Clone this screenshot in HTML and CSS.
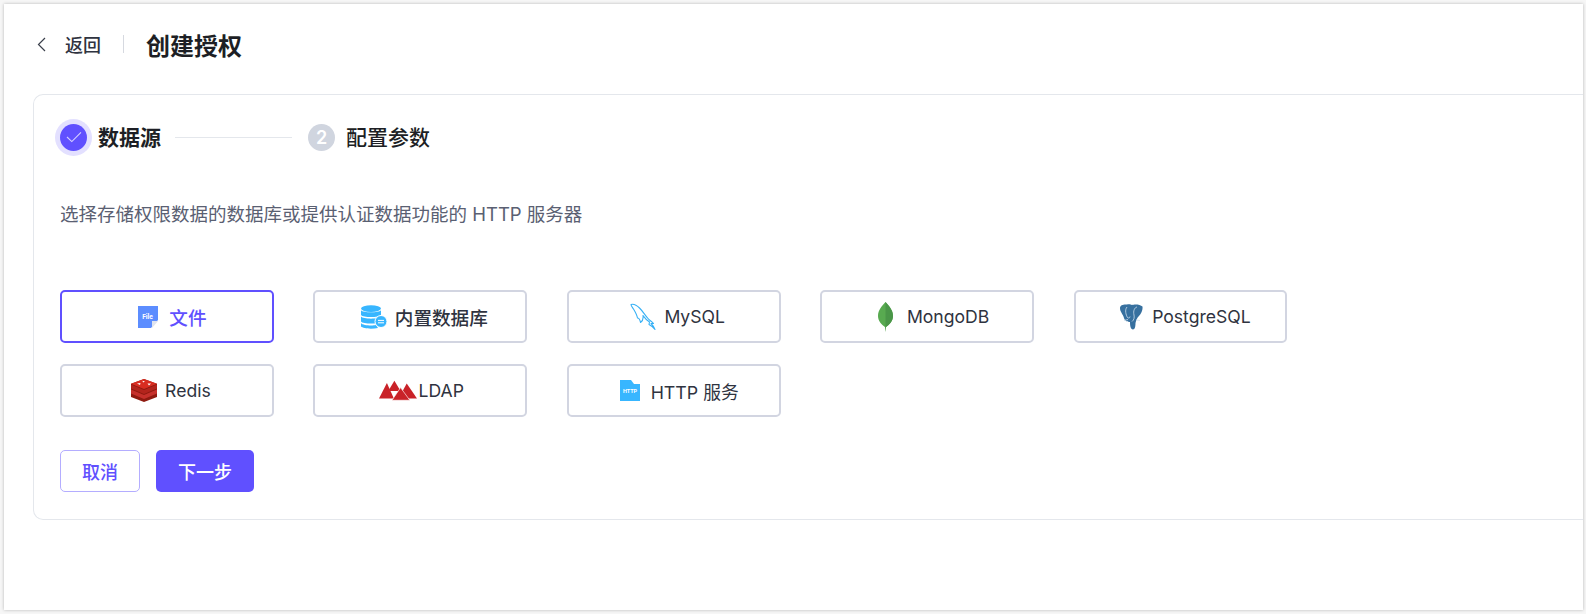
FILE: index.html
```html
<!doctype html>
<html>
	<head>
		<title>创建授权</title>
		<link rel="stylesheet" href="styles.css">
	</head>

	<body>
		<div class="page">
			<div class="page-header">
				<a class="back">
					<svg class="back-icon" width="9" height="15" viewBox="0 0 9 15"><path d="M8 1 1.5 7.5 8 14" fill="none" stroke="#3a3f4b" stroke-width="1.2"/></svg>
					<span>返回</span>
				</a>
				<span class="header-divider"></span>
				<h1>创建授权</h1>
			</div>

			<div class="card">
				<div class="steps">
					<div class="step step-done">
						<span class="step-dot">
							<svg width="16" height="12" viewBox="0 0 16 12"><path d="M1 6 5.8 10.6 15 1.4" fill="none" stroke="#d6d1ff" stroke-width="1.1"/></svg>
						</span>
						<span class="step-title">数据源</span>
					</div>
					<span class="step-line"></span>
					<div class="step">
						<span class="step-dot step-dot-wait">2</span>
						<span class="step-title step-title-wait">配置参数</span>
					</div>
				</div>

				<p class="desc">选择存储权限数据的数据库或提供认证数据功能的 HTTP 服务器</p>

				<div class="sources">
					<div class="source source-active">
						<span class="source-logo">
							<svg width="20" height="22" viewBox="0 0 20 22">
								<path d="M0 0H20V14L13 22H0Z" fill="#5c8dff"/>
								<path d="M20 15 14 22V15Z" fill="#dfe3ee"/>
								<text x="9.5" y="13" font-size="6.6" font-weight="700" fill="#fff" text-anchor="middle" font-family="Roboto, sans-serif">File</text>
							</svg>
						</span>
						<span class="label-cjk">文件</span>
					</div>
					<div class="source">
						<span class="source-logo">
							<svg width="26" height="24" viewBox="0 0 26 24">
								<ellipse cx="10" cy="3.6" rx="10" ry="3.4" fill="#38b6ff"/>
								<path d="M0 5.2C2 8 18 8 20 5.2V10C18 12.8 2 12.8 0 10Z" fill="#38b6ff"/>
								<path d="M0 11.6C2 14.4 18 14.4 20 11.6V16.4C18 19.2 2 19.2 0 16.4Z" fill="#38b6ff"/>
								<path d="M0 18C2 20.8 12 20.8 15 20L17 23C10 24.5 2 23.5 0 21.6Z" fill="#38b6ff"/>
								<circle cx="20" cy="16.5" r="6" fill="#38b6ff" stroke="#fff" stroke-width="1"/>
								<path d="M17 15.4H23M17 17.8H23" stroke="#fff" stroke-width="1"/>
							</svg>
						</span>
						<span class="label-cjk">内置数据库</span>
					</div>
					<div class="source">
						<span class="source-logo">
							<svg width="26" height="27" viewBox="0 0 26 27">
								<path d="M1 1.500C4 0.500 7 2.500 9.500 5 13 8.500 15 12 18 15.500 19.500 17.500 22 18.500 23.500 20.500L21 20.500C22.500 22 24 24 25 26.500 23 24 21 22.500 19 21.500L19.500 19C16 17 14.500 14.500 13 12.500 13.500 15.500 12.500 18 10.500 19.500 10 17 9 15 7.500 15 7 12 5 8.500 3.500 6 2.500 4.500 1 3 1 1.500Z" fill="none" stroke="#36b0f5" stroke-width="1.1" stroke-linejoin="round"/>
							</svg>
						</span>
						<span class="label-latin">MySQL</span>
					</div>
					<div class="source">
						<span class="source-logo">
							<svg width="15" height="30" viewBox="0 0 15 30">
								<path d="M7.5 0C11 4 15 8 15 14 15 19 11.500 22.500 8 25L7.500 30 7 25C3.500 22.500 0 19 0 14 0 8 4 4 7.500 0Z" fill="#58aa50"/>
								<path d="M7.500 0C11 4 15 8 15 14 15 19 11.500 22.500 8 25L7.500 30Z" fill="#4a9648"/>
							</svg>
						</span>
						<span class="label-latin">MongoDB</span>
					</div>
					<div class="source">
						<span class="source-logo">
							<svg width="23" height="26" viewBox="0 0 23 26">
								<path d="M0 4C0 1 4 0 7 0.500 9 0 11 0.500 12 1 14 0 20 0 22.500 2.500 23 6 21 10 18.500 12.500 17 14 16 17 15.500 19 15.500 22 15 25.500 13 25.500 10.500 25.500 10 21.500 10 18 8 18 5 17.500 4 14 3 10 0 8 0 4Z" fill="#37709f"/>
								<path d="M7 3C4.500 6 6 11 7.500 13.500 8.500 14.500 10 14 10 12.500M17 3C14.500 3.500 13 7 14 11 14.500 13.500 14 16 12 17.500M4 16.500 8 15.500M16 16 20 16.500" fill="none" stroke="#cfe0ee" stroke-width=".8"/>
							</svg>
						</span>
						<span class="label-latin">PostgreSQL</span>
					</div>
					<div class="source">
						<span class="source-logo">
							<svg width="26" height="23" viewBox="0 0 26 23">
								<path d="M0 4.800 13 0 26 4.800V18L13 23 0 18Z" fill="#8f1a10"/>
								<path d="M0 10.500 13 16 26 10.500 26 14.500 13 20 0 14.500Z" fill="#c6302b"/>
								<path d="M0 5.500 13 11 26 5.500 26 9.500 13 15 0 9.500Z" fill="#b3241c"/>
								<path d="M13 0 26 4.800 13 10 0 4.800Z" fill="#d82c20"/>
								<path d="M11.500 1.800 14 2.500 12 3.500ZM16.500 4.500 20 4.500 18 6.500ZM6 4.500 9.500 4 9 6Z" fill="#fff"/>
							</svg>
						</span>
						<span class="label-latin">Redis</span>
					</div>
					<div class="source">
						<span class="source-logo">
							<svg width="38" height="21" viewBox="0 0 37 19">
								<path d="M15 0 21 10H9Z" fill="#c92228"/>
								<path d="M7.700 2.300 14.500 17.300H0Z" fill="#c92228"/>
								<path d="M27 2.700 37 17.300H19Z" fill="#c92228"/>
								<path d="M21 6.700 30 19H12.700Z" fill="#c92228" stroke="#fff" stroke-width=".6"/>
							</svg>
						</span>
						<span class="label-latin">LDAP</span>
					</div>
					<div class="source">
						<span class="source-logo">
							<svg width="20" height="21" viewBox="0 0 20 21">
								<path d="M0 0H11L14 4H20V21H0Z" fill="#38b6ff"/>
								<text x="10" y="13" font-size="5.500" font-weight="700" fill="#fff" text-anchor="middle" font-family="Roboto, sans-serif">HTTP</text>
							</svg>
						</span>
						<span class="label-mixed">HTTP 服务</span>
					</div>
				</div>

				<div class="actions">
					<button class="btn btn-cancel">取消</button>
					<button class="btn btn-next">下一步</button>
				</div>
			</div>
		</div>
	</body>
</html>
```

FILE: styles.css
```css
:root {
	--primary: #6050ff;
	--border: #e4e7ec;
	--source-border: #d2d5e1;
	--text: #2f3340;
	--title: #1d1f25;
}

html,
body {
	height: 100%;
}

body {
	font-family: Inter, Roboto, "Noto Sans CJK SC", sans-serif;
	background-color: #f6f6f6;
	color: var(--text);
	margin: 0;
	padding: 4px 3px 4px 4px;
	box-sizing: border-box;
	overflow: hidden;
}

.page {
	background-color: #ffffff;
	height: 100%;
	box-shadow: 0 0 3px rgba(0, 0, 0, 0.25);
	padding: 0 0 0 29px;
	box-sizing: border-box;
	overflow: hidden;
}

.page-header {
	display: flex;
	align-items: center;
	height: 80px;
	margin-bottom: 10px;
}

.back {
	display: flex;
	align-items: center;
	gap: 19px;
	margin-left: 4px;
	font-size: 18px;
	font-weight: 500;
}

.header-divider {
	width: 1px;
	height: 18px;
	background-color: #d6d9e0;
	margin: 0 22px;
}

h1 {
	margin: 0;
	font-size: 24px;
	font-weight: 600;
	color: var(--title);
}

.card {
	border: 1px solid var(--border);
	border-right: none;
	border-radius: 10px 0 0 10px;
	padding: 24px 0 26px 26px;
	height: 426px;
	box-sizing: border-box;
}

.steps {
	display: flex;
	align-items: center;
	height: 36px;
}

.step {
	display: flex;
	align-items: center;
	gap: 11px;
}

.step-dot {
	display: flex;
	align-items: center;
	justify-content: center;
	width: 27px;
	height: 27px;
	border-radius: 50%;
	background-color: var(--primary);
}

.step-done .step-dot {
	box-shadow: 0 0 0 5px #e3e0ff;
}

.step-dot-wait {
	background-color: #d0d5df;
	color: #ffffff;
	font-size: 18px;
	font-weight: 600;
}

.step-title {
	margin-top: -2px;
	font-size: 21px;
	font-weight: 600;
	color: var(--title);
}

.step-title-wait {
	font-weight: 500;
}

.step-line {
	width: 117px;
	height: 1px;
	background-color: var(--border);
	margin: 0 16px 0 14px;
}

.desc {
	margin: 47px 0 0;
	font-size: 18.5px;
	line-height: 24px;
	color: #5a6072;
}

.sources {
	display: grid;
	grid-template-columns: repeat(5, 213.8px);
	gap: 21px 39.6px;
	margin-top: 64px;
}

.source {
	display: flex;
	align-items: center;
	justify-content: center;
	gap: 7px;
	height: 53px;
	padding-left: 7px;
	box-sizing: border-box;
	border: 2px solid var(--source-border);
	border-radius: 5px;
}

.source-active {
	border-color: var(--primary);
	color: var(--primary);
}

.source-logo {
	display: flex;
	justify-content: center;
	align-items: center;
	flex-shrink: 0;
	width: 28px;
}

.source-logo svg {
	flex-shrink: 0;
}

.label-cjk {
	font-size: 18.6px;
	font-weight: 500;
}

.label-latin {
	font-size: 17.6px;
}

.label-mixed {
	font-size: 17.8px;
}

.actions {
	display: flex;
	gap: 16px;
	margin-top: 33px;
}

.btn {
	height: 42px;
	padding: 0;
	border-radius: 5px;
	font-family: inherit;
	font-size: 18px;
	font-weight: 500;
	cursor: pointer;
}

.btn-cancel {
	width: 80px;
	background-color: #ffffff;
	border: 1px solid #b4adff;
	color: var(--primary);
}

.btn-next {
	width: 98px;
	background-color: var(--primary);
	border: none;
	color: #ffffff;
}
```
